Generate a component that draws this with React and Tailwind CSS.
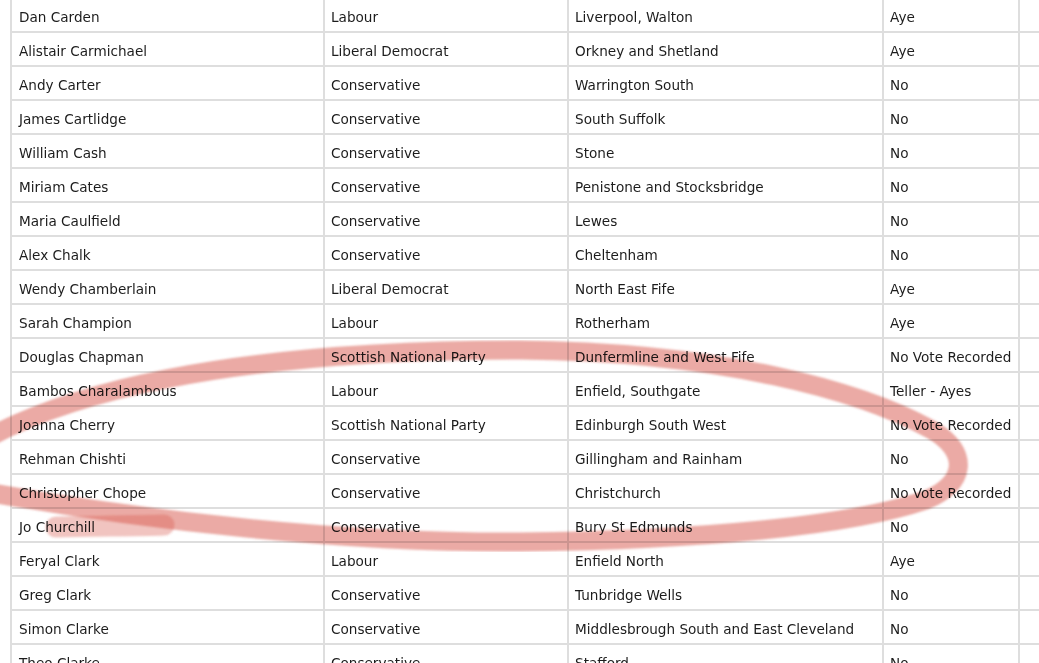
import React from "react";

const rows = [
  ["Dan Carden", "Labour", "Liverpool, Walton", "Aye"],
  ["Alistair Carmichael", "Liberal Democrat", "Orkney and Shetland", "Aye"],
  ["Andy Carter", "Conservative", "Warrington South", "No"],
  ["James Cartlidge", "Conservative", "South Suffolk", "No"],
  ["William Cash", "Conservative", "Stone", "No"],
  ["Miriam Cates", "Conservative", "Penistone and Stocksbridge", "No"],
  ["Maria Caulfield", "Conservative", "Lewes", "No"],
  ["Alex Chalk", "Conservative", "Cheltenham", "No"],
  ["Wendy Chamberlain", "Liberal Democrat", "North East Fife", "Aye"],
  ["Sarah Champion", "Labour", "Rotherham", "Aye"],
  ["Douglas Chapman", "Scottish National Party", "Dunfermline and West Fife", "No Vote Recorded"],
  ["Bambos Charalambous", "Labour", "Enfield, Southgate", "Teller - Ayes"],
  ["Joanna Cherry", "Scottish National Party", "Edinburgh South West", "No Vote Recorded"],
  ["Rehman Chishti", "Conservative", "Gillingham and Rainham", "No"],
  ["Christopher Chope", "Conservative", "Christchurch", "No Vote Recorded"],
  ["Jo Churchill", "Conservative", "Bury St Edmunds", "No"],
  ["Feryal Clark", "Labour", "Enfield North", "Aye"],
  ["Greg Clark", "Conservative", "Tunbridge Wells", "No"],
  ["Simon Clarke", "Conservative", "Middlesbrough South and East Cleveland", "No"],
  ["Theo Clarke", "Conservative", "Stafford", "No"],
];

export default function App() {
  return (
    <div className="relative w-[1039px] h-[663px] overflow-hidden bg-white">
      <div
        className="ml-[10px] -mt-px border-l-2 border-[#dedede] text-[13.6px] text-[#1c1c1c]"
        style={{ fontFamily: '"DejaVu Sans", Verdana, sans-serif' }}
      >
        {rows.map((r, i) => (
          <div
            key={i}
            className="grid grid-cols-[313px_244px_315px_136px_1fr] h-[34px] border-b-2 border-[#dedede]"
          >
            <div className="border-r-2 border-[#dedede] pl-[7px] pt-[5px] flex items-center whitespace-nowrap">{r[0]}</div>
            <div className="border-r-2 border-[#dedede] pl-[6px] pt-[5px] flex items-center whitespace-nowrap">{r[1]}</div>
            <div className="border-r-2 border-[#dedede] pl-[6px] pt-[5px] flex items-center whitespace-nowrap">{r[2]}</div>
            <div className="border-r-2 border-[#dedede] pl-[6px] pt-[5px] flex items-center whitespace-nowrap">{r[3]}</div>
            <div></div>
          </div>
        ))}
      </div>
      <svg
        className="absolute inset-0 pointer-events-none"
        width="1039"
        height="663"
        viewBox="0 0 1039 663"
      >
        <defs>
          <filter id="soft" x="-5%" y="-5%" width="110%" height="110%">
            <feGaussianBlur stdDeviation="1.2" />
          </filter>
        </defs>
        <g filter="url(#soft)" style={{ mixBlendMode: "multiply" }}>
          <path
            d="M -25 445 C 60 395, 220 350, 520 350 C 720 352, 860 390, 932 430 C 970 452, 966 484, 926 500 C 850 526, 700 540, 520 542 C 350 543, 150 522, -25 490"
            fill="none"
            stroke="#d8574b"
            strokeOpacity="0.5"
            strokeWidth="19"
            strokeLinecap="round"
          />
          <path
            d="M 56 527 C 90 526, 130 526, 164 525"
            fill="none"
            stroke="#d8574b"
            strokeOpacity="0.35"
            strokeWidth="21"
            strokeLinecap="round"
          />
        </g>
      </svg>
    </div>
  );
}
